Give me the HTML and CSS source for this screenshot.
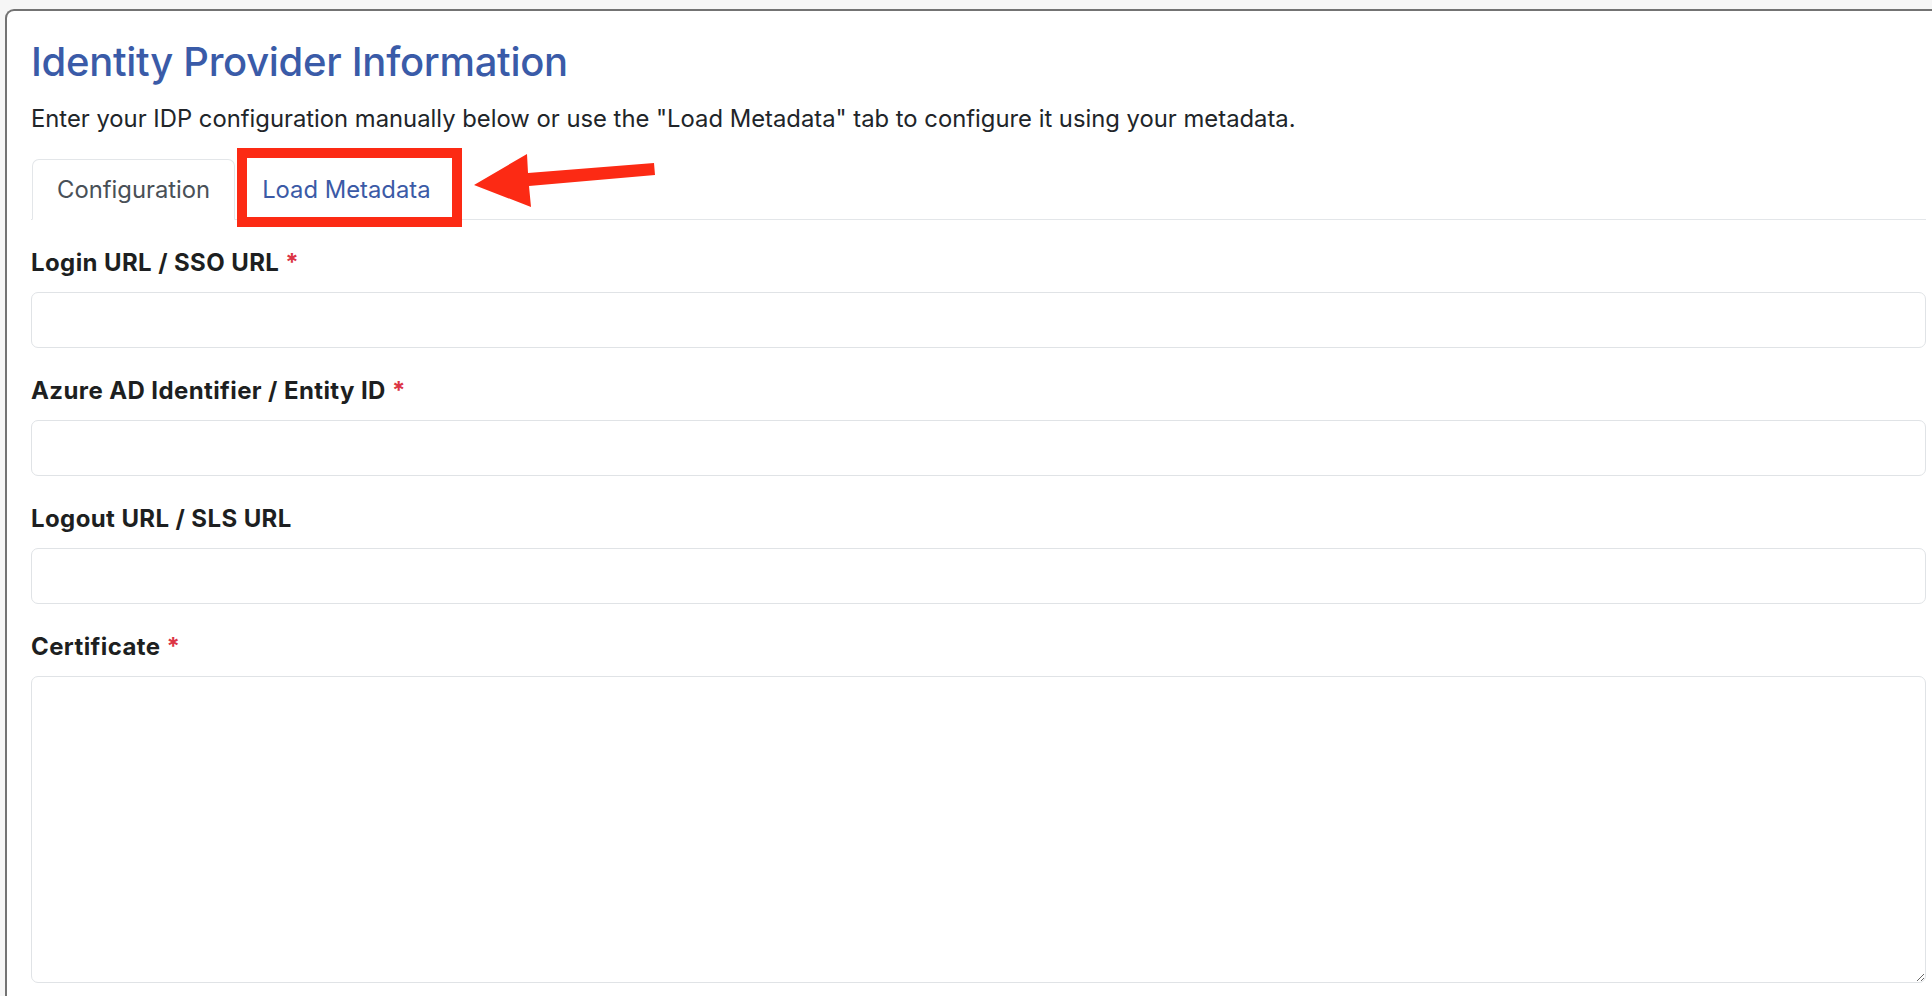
FILE: index.html
```html
<!DOCTYPE html>
<html lang="en">
<head>
<meta charset="utf-8">
<title>Identity Provider Information</title>
<link rel="stylesheet" href="styles.css">
</head>
<body>
<div class="panel">
  <h2 class="title">Identity Provider Information</h2>
  <p class="intro">Enter your IDP configuration manually below or use the "Load Metadata" tab to configure it using your metadata.</p>

  <ul class="tabs">
    <li class="tab active"><a class="tab-link">Configuration</a></li>
    <li class="tab"><a class="tab-link link">Load Metadata</a></li>
  </ul>

  <form class="form">
    <div class="group">
      <label class="label">Login URL / SSO URL <span class="req">*</span></label>
      <input class="field" type="text">
    </div>
    <div class="group">
      <label class="label">Azure AD Identifier / Entity ID <span class="req">*</span></label>
      <input class="field" type="text">
    </div>
    <div class="group">
      <label class="label">Logout URL / SLS URL</label>
      <input class="field" type="text">
    </div>
    <div class="group">
      <label class="label">Certificate <span class="req">*</span></label>
      <textarea class="field area"></textarea>
    </div>
  </form>

  <div class="highlight"></div>
  <svg class="arrow" width="192" height="64" viewBox="0 0 192 64" aria-hidden="true">
    <polygon points="5,36 58,5 59,24 185,14 186,26 60,37 62,58" fill="#fc2a14"/>
  </svg>
</div>
</body>
</html>
```

FILE: styles.css
```css
html, body {
  margin: 0;
  padding: 0;
}
body {
  background: #f6f6f6;
  overflow: hidden;
  font-family: Inter, "Liberation Sans", Arial, sans-serif;
  color: #212529;
}
.panel {
  position: relative;
  margin: 9px 0 0 5px;
  border-top: 2px solid #737373;
  border-left: 2px solid #737373;
  border-top-left-radius: 9px;
  background: #ffffff;
  padding: 26px 6px 40px 24px;
  min-height: 1100px;
}
.title {
  margin: 0;
  font-size: 40px;
  font-weight: 500;
  line-height: 50px;
  letter-spacing: -0.3px;
  color: #3a5ba8;
}
.intro {
  margin: 15px 0 0 0;
  font-size: 23.8px;
  line-height: 34px;
}
.tabs {
  list-style: none;
  margin: 23px 0 0 0;
  padding: 0 0 0 1px;
  display: flex;
  border-bottom: 1.5px solid #e3e6e9;
}
.tab {
  margin-bottom: -1.5px;
}
.tab-link {
  display: block;
  padding: 12px 24px 12px 24px;
  font-size: 23.8px;
  line-height: 35px;
  border: 1.5px solid transparent;
  border-top-left-radius: 7px;
  border-top-right-radius: 7px;
  color: #495057;
}
.tab.active .tab-link {
  border-color: #e3e6e9 #e3e6e9 #ffffff;
  background: #ffffff;
}
.tab-link.link {
  color: #3b5aa6;
  padding-left: 26px;
}
.form {
  margin-top: 26px;
}
.group {
  margin-bottom: 26px;
}
.label {
  display: block;
  margin-bottom: 12px;
  font-size: 24px;
  line-height: 34px;
  font-weight: 700;
  letter-spacing: 0.4px;
  color: #1d1f21;
}
.req {
  color: #dc3545;
}
.field {
  display: block;
  box-sizing: border-box;
  width: 100%;
  height: 56px;
  margin: 0;
  border: 1.5px solid #e0e3e6;
  border-radius: 7px;
  background: #ffffff;
  font-family: inherit;
  font-size: 23px;
  padding: 8px 16px;
}
.area {
  height: 307px;
  resize: vertical;
}
.highlight {
  position: absolute;
  left: 230px;
  top: 137px;
  width: 205px;
  height: 59px;
  border: 10px solid #fc2a14;
}
.arrow {
  position: absolute;
  left: 462px;
  top: 138px;
}
```
